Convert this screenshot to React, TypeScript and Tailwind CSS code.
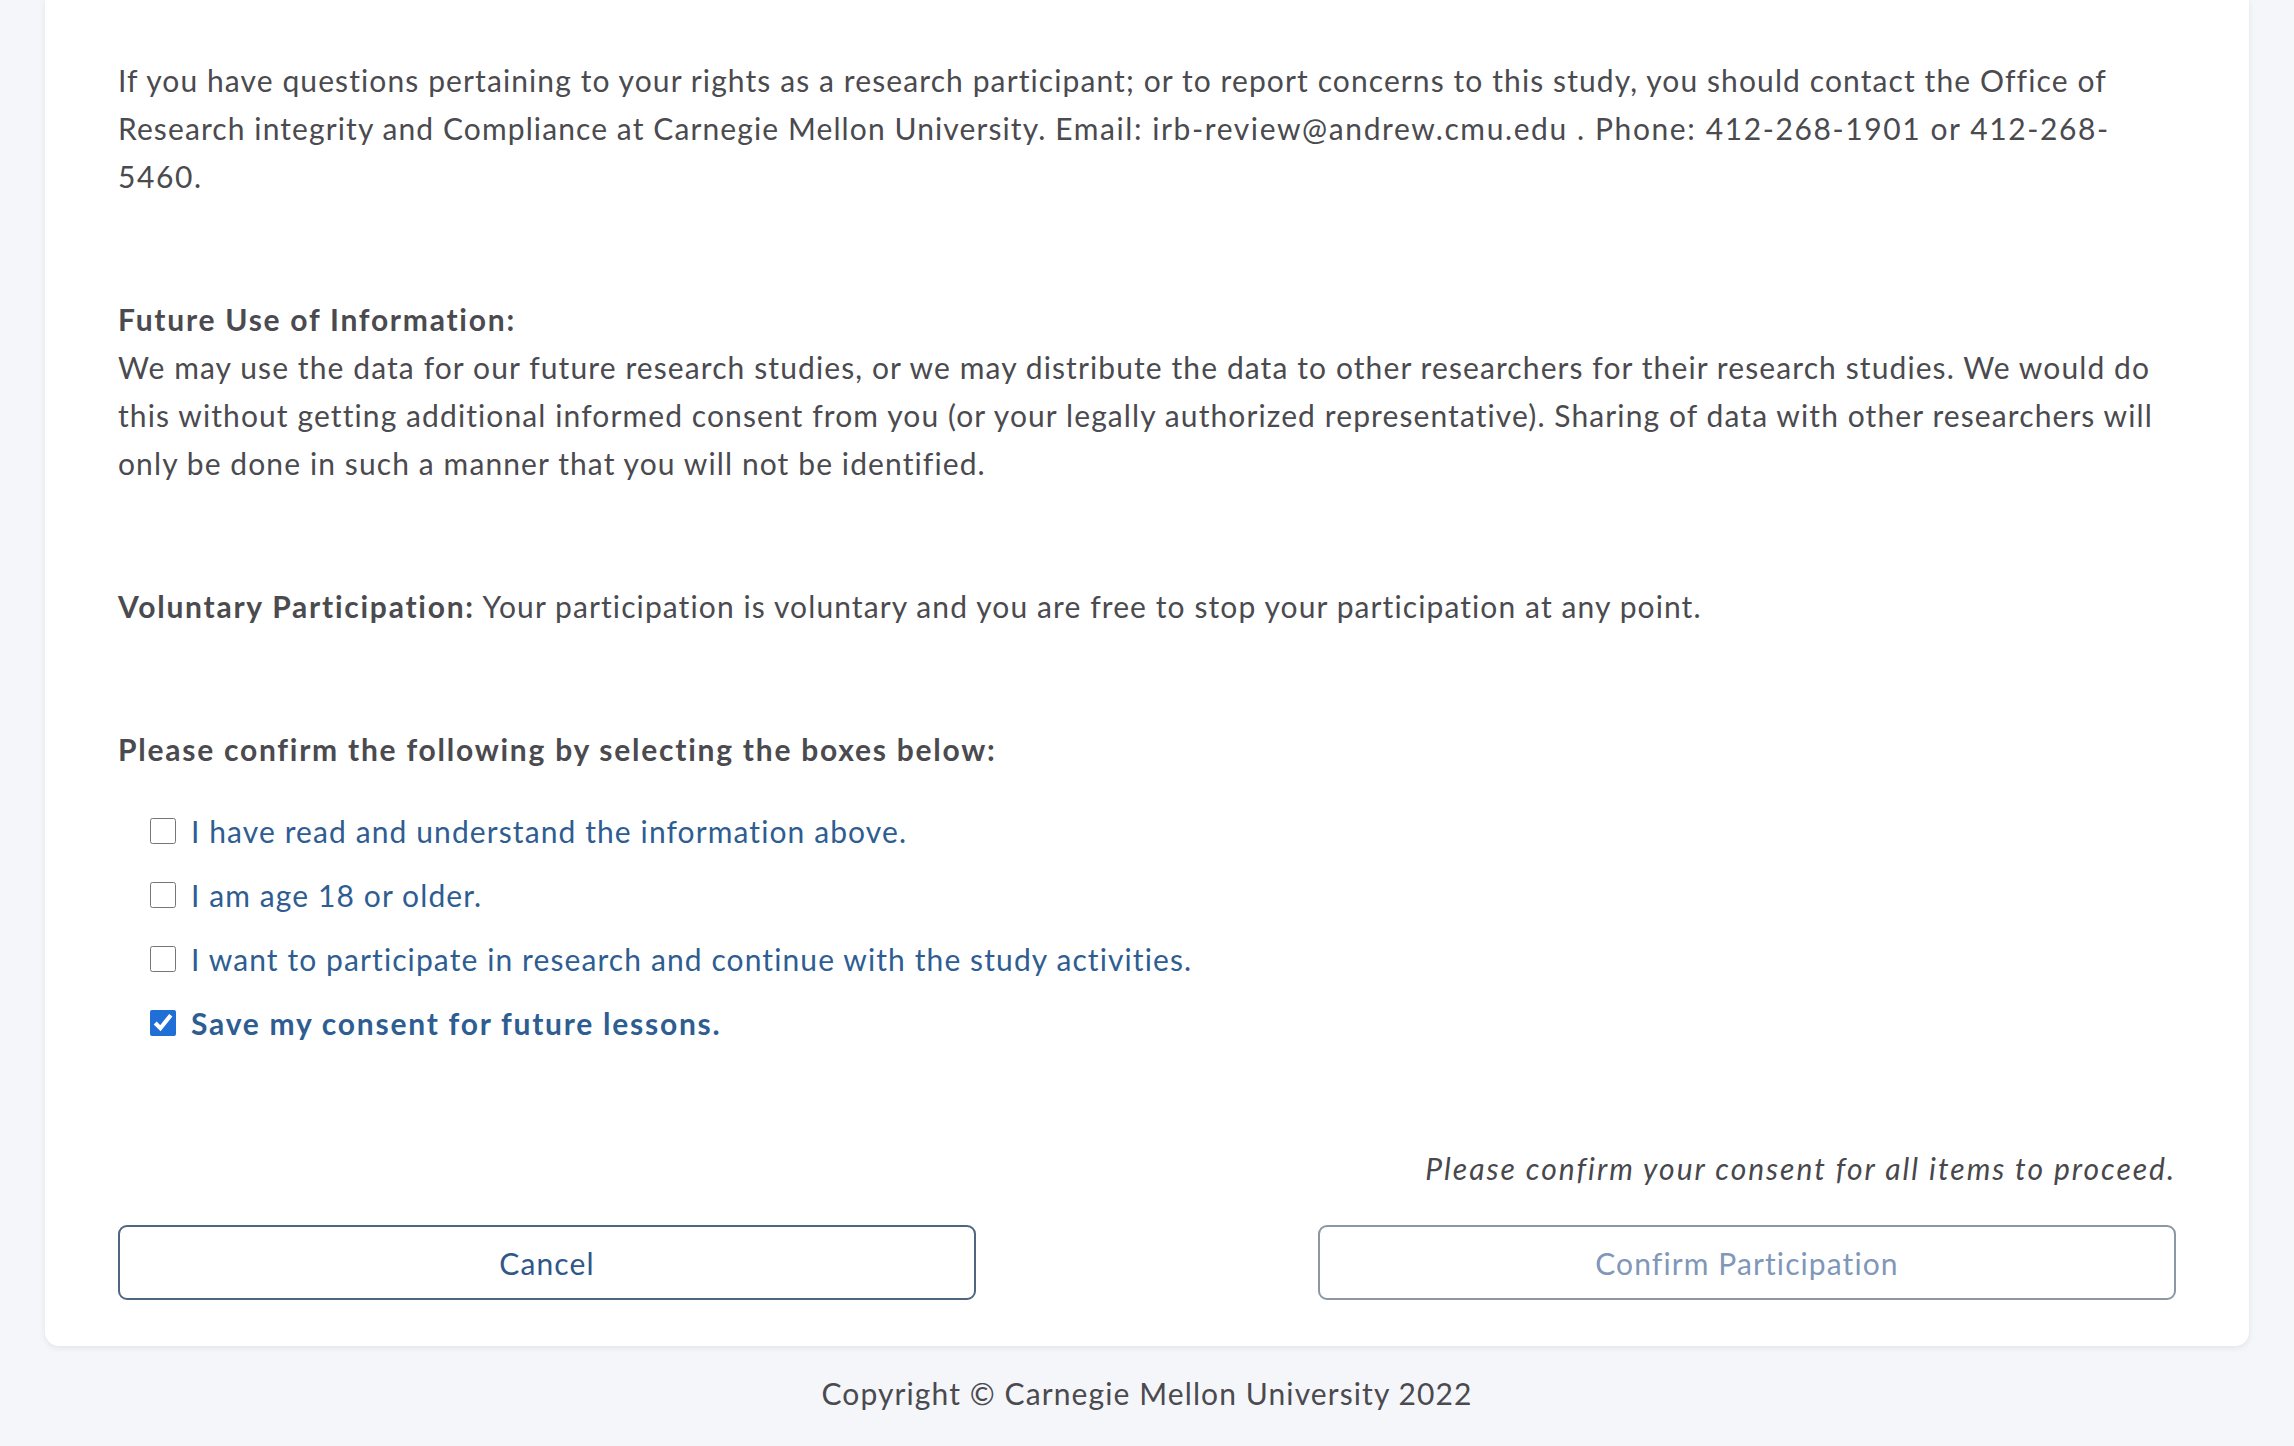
import { useState } from "react";

const items = [
  { id: "read", label: "I have read and understand the information above." },
  { id: "age", label: "I am age 18 or older." },
  { id: "participate", label: "I want to participate in research and continue with the study activities." },
  { id: "save", label: "Save my consent for future lessons." },
];

export default function App() {
  const [checked, setChecked] = useState<Record<string, boolean>>({ save: true });

  const allChecked = items.slice(0, 3).every((i) => checked[i.id]);

  return (
    <div
      className="min-h-screen w-full bg-[#f5f6fa] text-[30px] leading-[48px] tracking-[1.1px] text-[#4a4a4f]"
      style={{ fontFamily: "Lato, 'Open Sans', sans-serif" }}
    >
      <div className="mx-[45px] rounded-b-[14px] bg-white px-[73px] pt-[56px] pb-[46px] shadow-[0_2px_6px_rgba(0,0,0,0.08)]">
        <p>
          If you have questions pertaining to your rights as a research participant; or to report concerns to this
          study, you should contact the Office of Research integrity and Compliance at Carnegie Mellon University.{" "}
          <span className="tracking-[1.6px]">
            Email: irb-review@andrew.cmu.edu . Phone: 412-268-1901 or 412-268-5460.
          </span>
        </p>

        <div className="mt-[95px]">
          <p className="font-bold tracking-[1.75px]">Future Use of Information:</p>
          <p>
            We may use the data for our future research studies, or we may distribute the data to other researchers
            for their research studies. We would do this without getting additional informed consent from you (or
            your legally authorized representative). Sharing of data with other researchers will only be done in such
            a manner that you will not be identified.
          </p>
        </div>

        <p className="mt-[95px]">
          <span className="font-bold tracking-[1.75px]">Voluntary Participation:</span> Your participation is
          voluntary and you are free to stop your participation at any point.
        </p>

        <p className="mt-[95px] font-bold tracking-[1.75px]">
          Please confirm the following by selecting the boxes below:
        </p>

        <div className="mt-[26px] flex flex-col pl-[32px]">
          {items.map((item) => (
            <label key={item.id} className="flex h-[64px] cursor-pointer items-center gap-[15px] text-[#2e5d92]">
              <input
                type="checkbox"
                checked={!!checked[item.id]}
                onChange={(e) => setChecked({ ...checked, [item.id]: e.target.checked })}
                className="h-[26px] w-[26px] shrink-0 accent-[#1f6fd6]"
              />
              <span className={item.id === "save" ? "font-bold tracking-[1.75px]" : ""}>{item.label}</span>
            </label>
          ))}
        </div>

        <p className="mt-[89px] text-right italic tracking-[2px] text-[#47474c]">
          Please confirm your consent for all items to proceed.
        </p>

        <div className="mt-[33px] flex justify-between">
          <button className="h-[75px] w-[858px] rounded-[9px] border-2 border-[#4f6580] text-[#2f5788]">
            Cancel
          </button>
          <button
            disabled={!allChecked}
            className="h-[75px] w-[858px] rounded-[9px] border-2 border-[#8b97a3] text-[#7f97b8]"
          >
            Confirm Participation
          </button>
        </div>
      </div>

      <footer className="pt-[23px] text-center">Copyright © Carnegie Mellon University 2022</footer>
    </div>
  );
}
